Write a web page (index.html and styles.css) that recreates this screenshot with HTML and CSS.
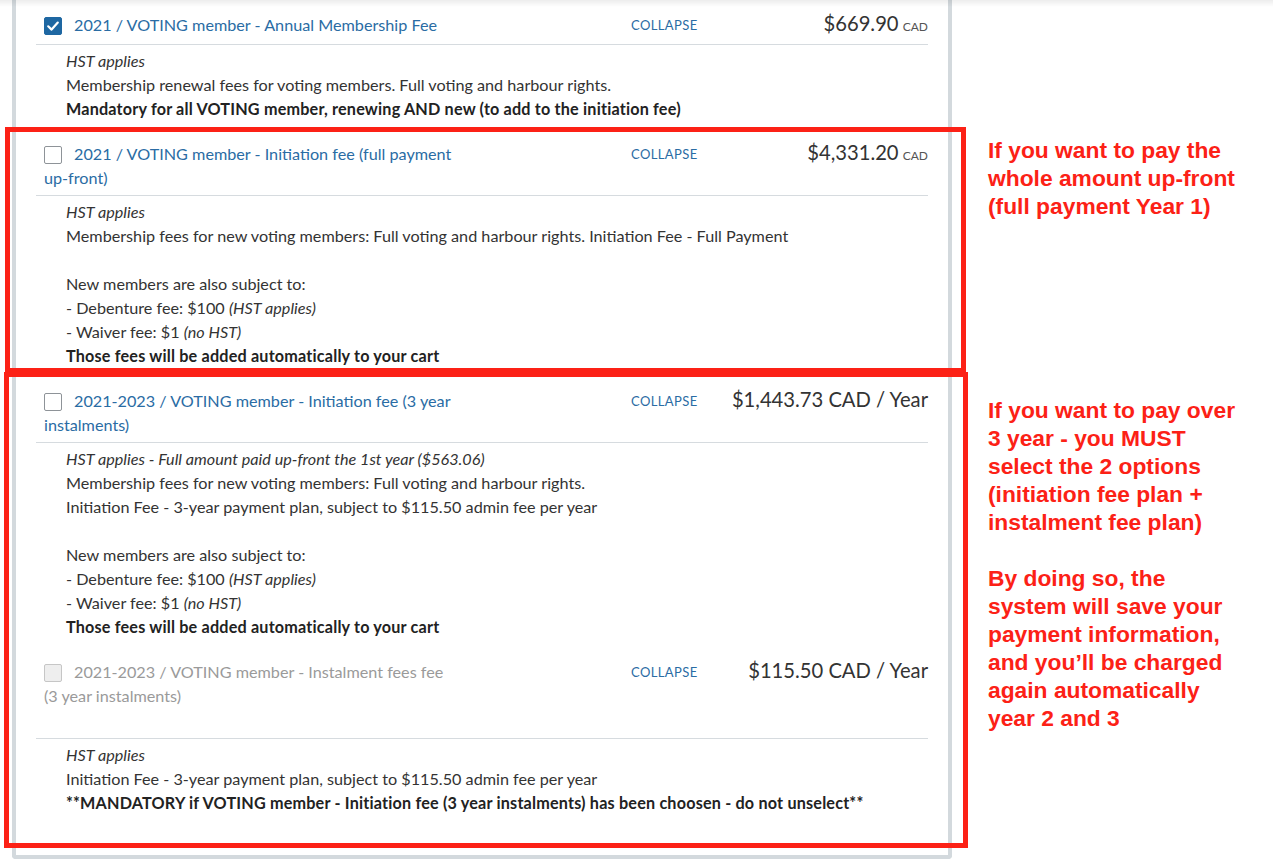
FILE: index.html
```html
<!DOCTYPE html>
<html lang="en">
<head>
<meta charset="utf-8">
<title>Membership fees</title>
<link rel="stylesheet" href="styles.css">
</head>
<body>
<div class="shade"></div>
<div class="page">
  <div class="card">
    <div class="item">
      <div class="item-head first">
        <div class="title"><span class="cb checked"><svg viewBox="0 0 18 18" width="18" height="18"><path d="M4.2 9.3 L7.6 12.6 L13.8 5.6" fill="none" stroke="#fff" stroke-width="2.2" stroke-linecap="round" stroke-linejoin="round"/></svg></span>2021 / VOTING member - Annual Membership Fee</div>
        <a class="collapse">COLLAPSE</a>
        <div class="price"><span class="amt">$669.90</span> <span class="cur">CAD</span></div>
      </div>
      <div class="item-body">
        <p><em>HST applies</em></p>
        <p>Membership renewal fees for voting members. Full voting and harbour rights.</p>
        <p><strong>Mandatory for all VOTING member, renewing AND new (to add to the initiation fee)</strong></p>
      </div>
    </div>

    <div class="item">
      <div class="item-head">
        <div class="title"><span class="cb"></span>2021 / VOTING member - Initiation fee (full payment <span class="nowrap">up-front)</span></div>
        <a class="collapse">COLLAPSE</a>
        <div class="price"><span class="amt">$4,331.20</span> <span class="cur">CAD</span></div>
      </div>
      <div class="item-body">
        <p><em>HST applies</em></p>
        <p>Membership fees for new voting members: Full voting and harbour rights. Initiation Fee - Full Payment</p>
        <p class="gap">New members are also subject to:</p>
        <p>- Debenture fee: $100 <em>(HST applies)</em></p>
        <p>- Waiver fee: $1 <em>(no HST)</em></p>
        <p><strong>Those fees will be added automatically to your cart</strong></p>
      </div>
    </div>

    <div class="item">
      <div class="item-head">
        <div class="title"><span class="cb"></span>2021-2023 / VOTING member - Initiation fee (3 year instalments)</div>
        <a class="collapse">COLLAPSE</a>
        <div class="price"><span class="amt">$1,443.73 CAD / Year</span></div>
      </div>
      <div class="item-body">
        <p><em>HST applies - Full amount paid up-front the 1st year ($563.06)</em></p>
        <p>Membership fees for new voting members: Full voting and harbour rights.</p>
        <p>Initiation Fee - 3-year payment plan, subject to $115.50 admin fee per year</p>
        <p class="gap">New members are also subject to:</p>
        <p>- Debenture fee: $100 <em>(HST applies)</em></p>
        <p>- Waiver fee: $1 <em>(no HST)</em></p>
        <p><strong>Those fees will be added automatically to your cart</strong></p>
      </div>
    </div>

    <div class="item">
      <div class="item-head tall">
        <div class="title disabled"><span class="cb off"></span>2021-2023 / VOTING member - Instalment fees fee <span class="nowrap">(3 year</span> instalments)</div>
        <a class="collapse">COLLAPSE</a>
        <div class="price"><span class="amt">$115.50 CAD / Year</span></div>
      </div>
      <div class="item-body">
        <p><em>HST applies</em></p>
        <p>Initiation Fee - 3-year payment plan, subject to $115.50 admin fee per year</p>
        <p><strong>**MANDATORY if VOTING member - Initiation fee (3 year instalments) has been choosen - do not unselect**</strong></p>
      </div>
    </div>
  </div>

  <div class="frame frame-1"></div>
  <div class="frame frame-2"></div>
  <div class="note note-1">If you want to pay the<br>whole amount up-front<br>(full payment Year 1)</div>
  <div class="note note-2">If you want to pay over<br>3 year - you MUST<br>select the 2 options<br>(initiation fee plan +<br>instalment fee plan)<br><br>By doing so, the<br>system will save your<br>payment information,<br>and you’ll be charged<br>again automatically<br>year 2 and 3</div>
</div>
</body>
</html>
```

FILE: styles.css
```css
* { box-sizing: border-box; }

html, body {
  margin: 0;
  padding: 0;
  background: #ffffff;
}

body {
  font-family: Lato, "Open Sans", sans-serif;
  font-size: 16.2px;
  line-height: 24px;
  color: #333333;
}

.shade {
  position: fixed;
  left: 0;
  top: 0;
  right: 0;
  height: 7px;
  background: linear-gradient(to bottom, rgba(0, 0, 0, 0.07), rgba(0, 0, 0, 0));
  z-index: 5;
}

.page {
  position: relative;
  width: 1273px;
  height: 864px;
}

.card {
  margin-left: 12px;
  width: 940px;
  border-left: 4px solid #d3d9dd;
  border-right: 4px solid #d3d9dd;
  border-bottom: 4px solid #d3d9dd;
  border-radius: 0 0 4px 4px;
  padding: 0 20px 32px 20px;
}

.item-head {
  display: grid;
  grid-template-columns: 587px auto 1fr;
  align-items: start;
  padding: 13px 0 5px 8px;
  border-bottom: 1px solid #d6dbdf;
}

.item-head.first {
  padding-bottom: 7px;
}

.item-head.tall {
  padding-bottom: 30px;
}

.title {
  max-width: 412px;
  color: #2a6ca4;
  line-height: 24px;
  height: auto;
}

.nowrap {
  white-space: nowrap;
}

.title.disabled {
  color: #9a9a9a;
}

.cb {
  display: inline-block;
  width: 18px;
  height: 18px;
  border: 1px solid #8e9398;
  border-radius: 2px;
  background: #fff;
  vertical-align: -4px;
  margin-right: 12px;
}

.cb svg {
  display: block;
  margin: -1px 0 0 -1px;
}

.cb.checked {
  background: #1e67a2;
  border-color: #1e67a2;
}

.cb.off {
  background: #eeeeee;
  border-color: #c6c6c6;
}

.collapse {
  color: #2a6ca4;
  font-size: 13px;
  line-height: 24px;
  letter-spacing: 0.4px;
  text-transform: uppercase;
  cursor: pointer;
}

.price {
  justify-self: end;
  color: #333333;
  white-space: nowrap;
  height: 24px;
  line-height: 24px;
}

.amt {
  font-size: 20.2px;
  line-height: 1;
}

.cur {
  font-size: 12px;
  line-height: 1;
  color: #555555;
}

.item-body {
  padding: 4px 0 8px 30px;
}

.item-body p {
  margin: 0;
}

.item-body p.gap {
  margin-top: 24px;
}

.item-body em {
  font-style: italic;
}

.item-body strong {
  font-weight: 700;
  letter-spacing: 0.18px;
  color: #222222;
}

.frame {
  position: absolute;
  border: 5px solid #fc2116;
  pointer-events: none;
}

.frame-1 {
  left: 5px;
  top: 127px;
  width: 961px;
  height: 246px;
}

.frame-2 {
  left: 4px;
  top: 372px;
  width: 964px;
  height: 476px;
}

.note {
  position: absolute;
  left: 988px;
  font-family: "Liberation Sans", Arial, sans-serif;
  font-weight: 700;
  font-size: 22.8px;
  line-height: 28px;
  color: #fc2116;
}

.note-1 {
  top: 136px;
}

.note-2 {
  top: 396px;
}
```
